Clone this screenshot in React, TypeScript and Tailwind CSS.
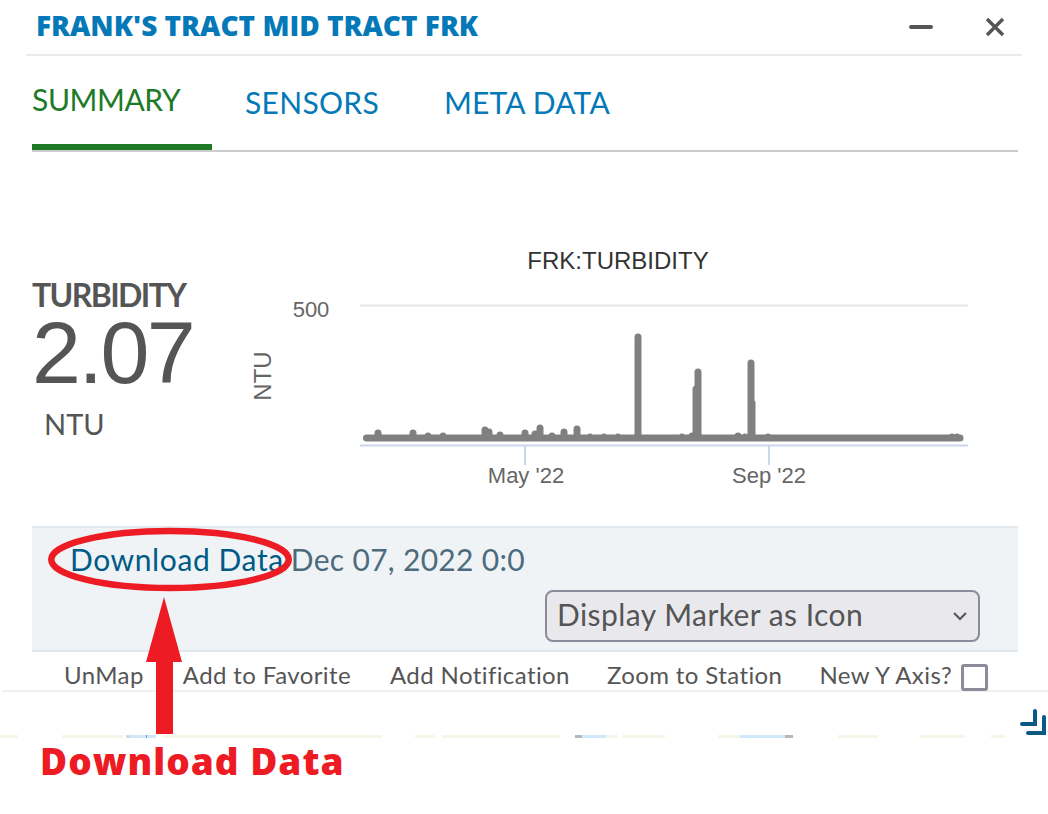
// x position and top edge of each spike in the series
const points: [number, number][] = [
  [378, 430], [413, 430], [428, 433], [443, 433], [485, 427], [489, 429], [500, 432], [525, 430],
  [535, 431], [540, 425], [552, 433], [564, 429], [577, 426], [590, 434], [604, 434], [618, 434],
  [638, 334], [682, 434], [692, 433], [696, 386], [698, 369], [738, 433], [745, 434], [751, 360],
  [752, 400], [768, 434], [806, 435], [808, 435], [857, 435], [869, 435], [895, 435], [900, 435],
  [952, 434], [957, 434],
];

const seriesPath = ['M366.5 438 L960 438', ...points.map(([x, top]) => `M${x} ${top + 3} L${x} 438`)].join(' ');

function TurbidityChart() {
  return (
    <svg width="740" height="270" viewBox="240 240 740 270" className="block">
      <text x="618" y="269" textAnchor="middle" fontFamily="Liberation Sans" fontSize="24" fill="#333333">
        FRK:TURBIDITY
      </text>
      <line x1="360" y1="305.5" x2="968" y2="305.5" stroke="#e6e6e6" strokeWidth="2" />
      <line x1="360" y1="445.5" x2="968" y2="445.5" stroke="#ccd6eb" strokeWidth="2" />
      <line x1="525" y1="446" x2="525" y2="465" stroke="#ccd6eb" strokeWidth="2" />
      <line x1="769" y1="446" x2="769" y2="465" stroke="#ccd6eb" strokeWidth="2" />
      <text x="311" y="317" textAnchor="middle" fontFamily="Liberation Sans" fontSize="22" fill="#666666">
        500
      </text>
      <text
        x="0"
        y="0"
        transform="translate(271 376) rotate(-90)"
        textAnchor="middle"
        fontFamily="Liberation Sans"
        fontSize="24"
        fill="#666666"
      >
        NTU
      </text>
      <text x="526" y="483" textAnchor="middle" fontFamily="Liberation Sans" fontSize="22" fill="#666666">
        May '22
      </text>
      <text x="769" y="483" textAnchor="middle" fontFamily="Liberation Sans" fontSize="22" fill="#666666">
        Sep '22
      </text>
      <path d={seriesPath} stroke="#808080" strokeWidth="7" strokeLinecap="round" fill="none" />
    </svg>
  );
}

// the map peeking out under the window
function MapSliver() {
  return (
    <div className="flex h-[3px] shrink-0 bg-white">
      <div className="w-[18px] bg-[#f4f7e8]" />
      <div className="ml-[44px] w-[61px] bg-[#f4f7e8]" />
      <div className="ml-[3px] w-[4px] bg-[#d5d8dc]" />
      <div className="w-[16px] bg-[#cde9fb]" />
      <div className="w-[1px] bg-[#8a949c]" />
      <div className="w-[9px] bg-[#cde9fb]" />
      <div className="ml-[7px] w-[219px] bg-[#f4f7e8]" />
      <div className="ml-[33px] w-[20px] bg-[#f4f7e8]" />
      <div className="ml-[7px] w-[118px] bg-[#f4f7e8]" />
      <div className="ml-[15px] w-[7px] bg-[#b4b8ba]" />
      <div className="w-[24px] bg-[#cde9fb]" />
      <div className="w-[12px] bg-[#f4f7e8]" />
      <div className="ml-[5px] w-[42px] bg-[#f4f7e8]" />
      <div className="ml-[53px] w-[22px] bg-[#f4f7e8]" />
      <div className="w-[45px] bg-[#cde9fb]" />
      <div className="w-[8px] bg-[#b4b8ba]" />
      <div className="ml-[45px] w-[40px] bg-[#f4f7e8]" />
      <div className="ml-[42px] w-[45px] bg-[#f4f7e8]" />
      <div className="ml-[26px] w-[14px] bg-[#f4f7e8]" />
    </div>
  );
}

export default function App() {
  return (
    <div className="relative flex h-[814px] w-[1048px] flex-col overflow-hidden bg-white font-['Lato',sans-serif] text-[#555555]">
      <header className="mx-[26px] flex h-[56px] shrink-0 items-center justify-between border-b-2 border-[#ebebeb] pl-[10px] pr-[16px]">
        <h1 className="pb-[4px] font-['Open_Sans',sans-serif] text-[28px] font-extrabold text-[#0579b8]">
          FRANK'S TRACT MID TRACT FRK
        </h1>
        <div className="flex items-center gap-[51px]">
          <span className="h-[4px] w-[24px] rounded-sm bg-[#555555]" />
          <svg width="22" height="22" viewBox="0 0 22 22" fill="none" stroke="#555555" strokeWidth="3.4">
            <path d="M3 3 L19 19 M19 3 L3 19" />
          </svg>
        </div>
      </header>

      <nav className="mx-[32px] mr-[30px] flex h-[96px] shrink-0 items-start border-b-2 border-[#cccccc] text-[30px]">
        <a className="h-[94px] w-[180px] border-b-[6px] border-[#1d7a27] pt-[21px] tracking-[-0.4px] text-[#1d7a27]">SUMMARY</a>
        <a className="ml-[33px] pt-[24px] tracking-[0.3px] text-[#0579b8]">SENSORS</a>
        <a className="ml-[65px] pt-[24px] tracking-[0.2px] text-[#0579b8]">META DATA</a>
      </nav>

      <section className="flex h-[374px] shrink-0">
        <div className="ml-[32px] w-[208px] pt-[125px]">
          <div className="text-[32px] font-bold leading-[36px] tracking-[-1.6px]">TURBIDITY</div>
          <div className="font-['Liberation_Sans',sans-serif] text-[88px] leading-[80px] tracking-[-2.5px]">2.07</div>
          <div className="ml-[12px] mt-[14px] text-[29px] leading-[34px]">NTU</div>
        </div>
        <div className="pt-[88px]">
          <TurbidityChart />
        </div>
      </section>

      <section className="mx-[32px] mr-[30px] flex h-[126px] shrink-0 flex-col border-y-2 border-[#e1e9ef] bg-[#eff3f6]">
        <div className="mt-[13px] flex pl-[38px] text-[30px] leading-[36px] tracking-[0.6px]">
          <a className="text-[#005a86]">Download Data</a>
          <span className="ml-[7px] tracking-[0.3px] text-[#4d6b7c]">Dec 07, 2022 0:0</span>
        </div>
        <div className="mr-[38px] mt-[13px] flex h-[52px] w-[435px] items-center justify-between self-end rounded-[8px] border-2 border-[#8d8b99] bg-[#e9e9ed] pl-[10px] pr-[10px] text-[30px] tracking-[0.45px]">
          <span className="pb-[3px]">Display Marker as Icon</span>
          <svg width="16" height="10" viewBox="0 0 16 10" fill="none" stroke="#555555" strokeWidth="2">
            <path d="M2 2 L8 8 L14 2" />
          </svg>
        </div>
      </section>

      <div className="ml-[2px] flex h-[40px] shrink-0 items-center border-b-2 border-[#f0f0f0] pl-[62px] pt-[8px] text-[24px] tracking-[0.4px]">
        <span>UnMap</span>
        <span className="ml-[39px]">Add to Favorite</span>
        <span className="ml-[39px]">Add Notification</span>
        <span className="ml-[37px]">Zoom to Station</span>
        <span className="ml-[37px]">New Y Axis?</span>
        <span className="ml-[9px] mt-[5px] h-[27px] w-[27px] rounded-[3px] border-[3px] border-[#8d8b99] bg-white" />
      </div>

      <div className="flex h-[43px] shrink-0 items-end justify-end pr-[2px]">
        <svg width="26" height="26" viewBox="0 0 26 26" fill="none" stroke="#0b5a86" strokeWidth="4" strokeLinecap="round">
          <path d="M2 15 L15 15 L15 2 M8 24 L24 24 L24 8" />
        </svg>
      </div>

      <MapSliver />

      <div className="ml-[40px] font-['Open_Sans',sans-serif] text-[37px] font-extrabold leading-[46px] tracking-[1px] text-[#ed1c24]">
        Download Data
      </div>

      {/* red annotation over the panel */}
      <svg width="320" height="220" viewBox="0 0 320 220" className="absolute left-0 top-[525px]">
        <ellipse cx="170" cy="34.5" rx="118.75" ry="28.5" fill="none" stroke="#ed1c24" strokeWidth="6.5" />
        <path d="M164 72 L182 137 L173 137 L173 209 L156 209 L156 137 L146 137 Z" fill="#ed1c24" />
      </svg>
    </div>
  );
}
